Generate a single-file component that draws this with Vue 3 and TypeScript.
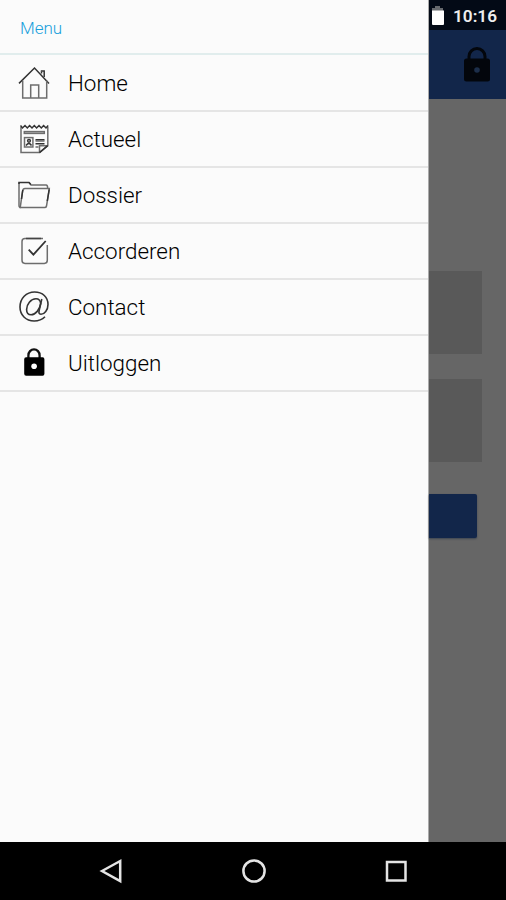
<script setup lang="ts">
type IconName = 'home' | 'news' | 'folder' | 'check' | 'contact' | 'lock'

interface MenuItem {
  label: string
  icon: IconName
}

const items: MenuItem[] = [
  { label: 'Home', icon: 'home' },
  { label: 'Actueel', icon: 'news' },
  { label: 'Dossier', icon: 'folder' },
  { label: 'Accorderen', icon: 'check' },
  { label: 'Contact', icon: 'contact' },
  { label: 'Uitloggen', icon: 'lock' },
]
</script>

<template>
  <div class="screen">
    <div class="main">
      <nav class="drawer">
        <header class="drawer-title">Menu</header>
        <ul class="menu">
          <li v-for="item in items" :key="item.label" class="menu-item">
            <svg class="icon" viewBox="0 0 34 34">
              <g v-if="item.icon === 'home'">
                <path class="line" d="M2 17.4 17.5 2 32 17.4" />
                <path class="soft" d="M5.7 14.5V32H29.7V14.5M13.7 32V18.9H21.7V32" />
                <path class="line" d="M23.8 5H27.2V11" />
                <path class="line" d="M24.5 5.5V7.5" />
              </g>
              <g v-else-if="item.icon === 'news'">
                <path class="soft" d="M4 5V30.6H22.5L30.8 23.6V5M22.5 30.6V23.8H30.8" />
                <path class="line" d="M3.5 3.5 5.5 6 8 3.5 10.3 6 12.6 3.5 15 6 17.3 3.5 19.6 6 22 3.5 24.3 6 26.6 3.5 29 6 31.2 3.5" />
                <path class="line" d="M22.5 30.6 30.8 23.6" />
                <rect class="soft" x="7.3" y="9.6" width="20" height="1.8" />
                <rect class="soft" x="7.5" y="15.6" width="8.4" height="9.4" />
                <circle class="line" cx="12" cy="18.8" r="1.4" />
                <path class="line" d="M9 23.5Q12 19.6 14.5 23.5" />
                <path class="line" d="M18.5 17.7H27.5M18.5 21.7H27.5" />
                <path class="soft" d="M18.5 19H27.5M18.5 25H21.5" />
              </g>
              <g v-else-if="item.icon === 'folder'">
                <path class="soft" d="M4 29.5Q2 29.5 2 27.5V4.4M12 4.4 14 7H29Q30.8 7 30.6 10.5" />
                <path class="line" d="M2 6V4.4H12L13.8 6.5" />
                <path class="soft" d="M3.2 29.6 5.6 13Q6 10.6 8 10.6H32.3L29.5 28Q29.2 29.6 27.6 29.6Z" />
                <path class="line" d="M5.8 12 4.5 21M32.2 11.5 30.3 23" />
              </g>
              <g v-else-if="item.icon === 'check'">
                <path class="soft" d="M26 4.5H8Q5 4.5 5 7.5V26.3Q5 29.4 8 29.4H27.3Q30.3 29.4 30.3 26.3V11" />
                <path class="edge" d="M24 4.5H9" />
                <path class="tick" d="M11.7 15.6 16.4 20.7 28.7 7" />
              </g>
              <g v-else-if="item.icon === 'contact'">
                <path class="at" d="M28 26.8C24.8 30 21.3 31 17.2 31C8.8 31 3 25 3 17C3 8.4 9.2 2 17.6 2C25.6 2 31 7.2 31 14.4C31 20 27.3 24.3 24 24.3C21.6 24.3 21.7 22.4 22.2 20.2L24.8 9" />
                <path class="at" d="M23.7 13.7C23.4 10.6 21.5 8.8 19 8.8C13.8 8.8 9.6 14.2 9.6 19.4C9.6 22.7 11.3 24.7 14.1 24.7C18.6 24.7 22.8 19.5 23.7 13.7Z" />
              </g>
              <g v-else>
                <path class="shackle" d="M11.4 13V9.4A5.6 6 0 0 1 22.6 9.4V13" />
                <path d="M9.3 11.3H25.2A2 2 0 0 1 27.4 13.3V27.8A2 2 0 0 1 25.2 29.8H9.3A2 2 0 0 1 7.2 27.8V13.3A2 2 0 0 1 9.3 11.3Z" />
                <circle class="keyhole" cx="17.1" cy="20.2" r="2.8" />
              </g>
            </svg>
            <span class="label">{{ item.label }}</span>
          </li>
        </ul>
      </nav>
      <div class="page">
        <div class="status">
          <svg class="battery" viewBox="0 0 14 20">
            <path class="battery-top" d="M4 0H9V2H12V5H1V2H4Z" />
            <path class="battery-fill" d="M1 4.5H13V18Q13 19 12 19H2Q1 19 1 18Z" />
          </svg>
          <span class="time">10:16</span>
        </div>
        <div class="toolbar">
          <svg class="toolbar-lock" viewBox="0 0 28 36">
            <path class="toolbar-shackle" d="M6 13V9.5A8 8 0 0 1 22 9.5V13" />
            <rect x="1" y="11.5" width="26" height="23" rx="2.5" />
            <circle class="toolbar-hole" cx="14" cy="23" r="2.8" />
          </svg>
        </div>
        <div class="form">
          <div class="field"></div>
          <div class="field"></div>
          <div class="button"></div>
        </div>
      </div>
    </div>
    <footer class="navbar">
      <svg class="nav-icon" viewBox="0 0 26 26"><path d="M3 13 21.2 3V23.2Z" /></svg>
      <svg class="nav-icon" viewBox="0 0 26 26"><circle cx="13" cy="13" r="10.6" /></svg>
      <svg class="nav-icon" viewBox="0 0 26 26"><rect x="4" y="4" width="18.5" height="18.5" /></svg>
    </footer>
  </div>
</template>

<style>
body {
  margin: 0;
  background: #000;
}
</style>

<style scoped>
.screen {
  width: 506px;
  height: 900px;
  display: flex;
  flex-direction: column;
  overflow: hidden;
  font-family: Roboto, "Liberation Sans", sans-serif;
}
.main {
  height: 842px;
  display: flex;
}
.drawer {
  box-sizing: border-box;
  width: 429px;
  background: #fbfbfb;
  border-right: 1px solid #aaa;
}
.drawer-title {
  height: 53px;
  padding: 3px 0 0 20px;
  box-sizing: border-box;
  color: #18a0dc;
  font-size: 17px;
  font-weight: 300;
  line-height: 50px;
}
.menu {
  list-style: none;
  margin: 0;
  padding: 0;
  border-top: 2px solid #e1eded;
}
.menu-item {
  box-sizing: border-box;
  height: 56px;
  padding: 0 0 1px 17px;
  border-bottom: 2px solid #e5e5e5;
  display: flex;
  align-items: center;
  gap: 17px;
}
.menu-item:first-child {
  height: 57px;
  padding-top: 1px;
}
.icon {
  width: 34px;
  height: 34px;
  flex: none;
  fill: #000;
}
.line,
.soft,
.tick,
.at,
.edge,
.shackle {
  fill: none;
  stroke: #333;
  stroke-width: 1.5;
}
.soft {
  stroke: #6d6d6d;
}
.edge {
  stroke: #444;
}
.tick {
  stroke-width: 1.8;
}
.at {
  stroke: #333;
  stroke-width: 1.6;
}
.shackle {
  stroke: #111;
  stroke-width: 2.3;
}
.keyhole {
  fill: #fff;
}
.label {
  color: #000;
  font-size: 22.4px;
  font-weight: 300;
  line-height: 30px;
}
.page {
  flex: 1;
  background: #666;
}
.status {
  height: 30px;
  background: #030a16;
  display: flex;
  align-items: center;
  gap: 8px;
  padding-left: 2px;
}
.battery {
  width: 14px;
  height: 20px;
  margin-top: 1px;
}
.battery-top {
  fill: #66696d;
}
.battery-fill {
  fill: #fff;
}
.time {
  color: #eee;
  font-size: 17.2px;
  font-weight: 600;
  padding-top: 2px;
}
.toolbar {
  height: 69px;
  background: #12264a;
  display: flex;
  align-items: center;
  justify-content: flex-end;
  padding-right: 15px;
}
.toolbar-lock {
  width: 28px;
  height: 36px;
  fill: #03060c;
}
.toolbar-shackle {
  fill: none;
  stroke: #03060c;
  stroke-width: 3;
}
.toolbar-hole {
  fill: #1c2e4a;
}
.form {
  padding-top: 172px;
}
.field {
  width: 53px;
  height: 83px;
  margin-bottom: 25px;
  background: #595959;
}
.button {
  width: 48px;
  height: 44px;
  margin-top: 32px;
  border-radius: 0 2px 2px 0;
  background: #12264a;
  box-shadow: 0 1px 2px #3d4652;
}
.navbar {
  height: 58px;
  box-sizing: border-box;
  background: #000;
  display: flex;
  justify-content: center;
  align-items: center;
  gap: 116px;
  padding-left: 1px;
}
.nav-icon {
  width: 26px;
  height: 26px;
  fill: none;
  stroke: #e4e4e4;
  stroke-width: 2.5;
}
</style>
